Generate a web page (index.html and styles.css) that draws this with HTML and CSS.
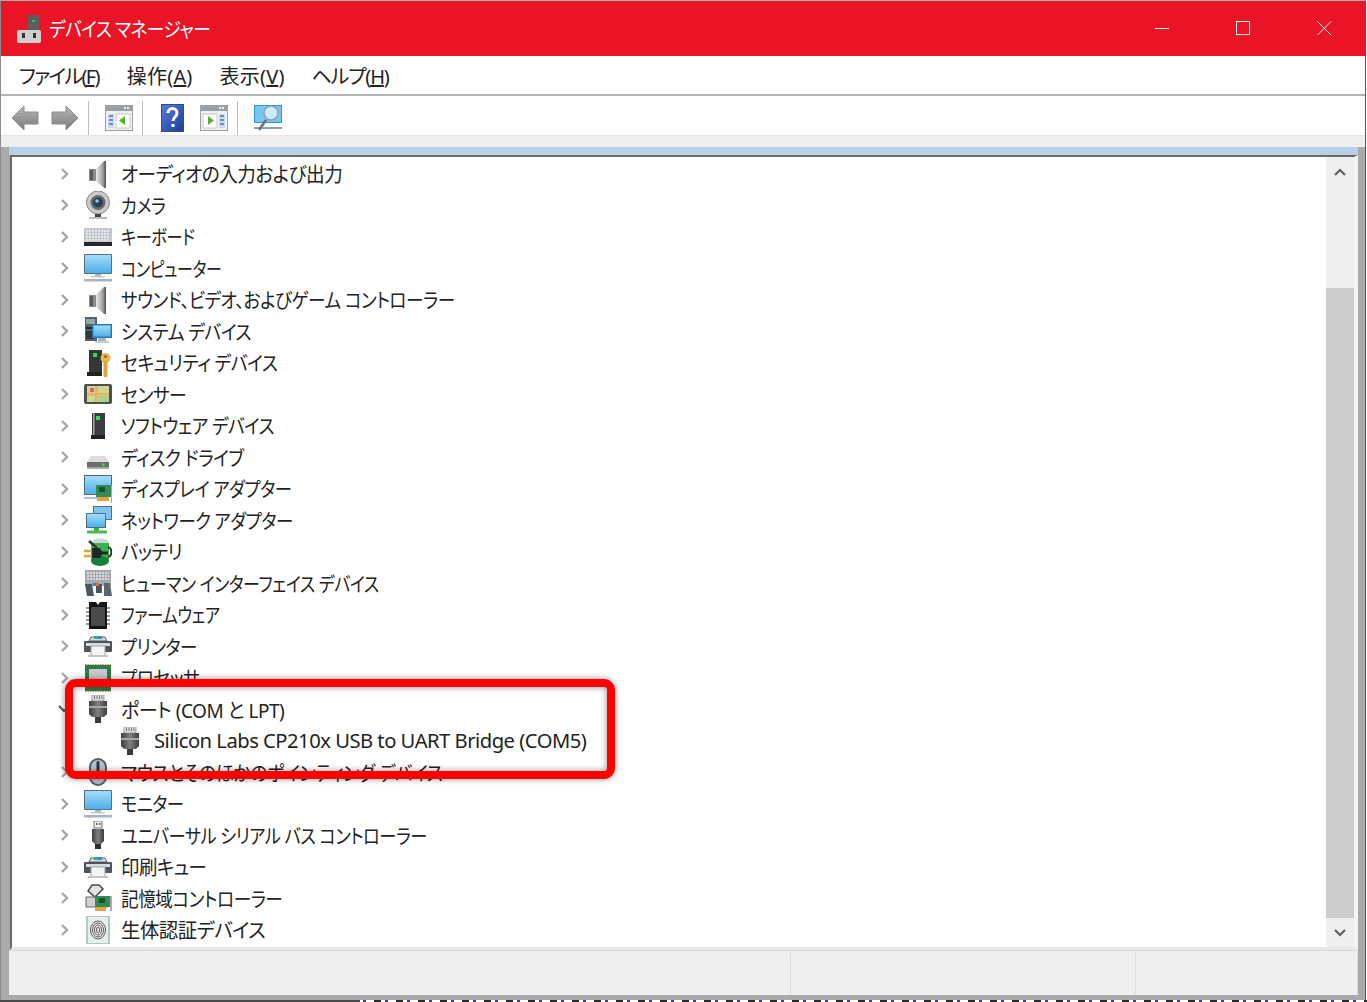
FILE: index.html
```html
<!DOCTYPE html>
<html lang="ja">
<head>
<meta charset="utf-8">
<title>デバイス マネージャー</title>
<link rel="stylesheet" href="styles.css">
</head>
<body>
<svg class="defs" aria-hidden="true">
  <defs>
    <linearGradient id="gSteel" x1="0" y1="0" x2="1" y2="0"><stop offset="0" stop-color="#e8e8e8"/><stop offset=".55" stop-color="#b0b0b0"/><stop offset="1" stop-color="#6a6a6a"/></linearGradient>
    <linearGradient id="gDark" x1="0" y1="0" x2="1" y2="0"><stop offset="0" stop-color="#3c3c3c"/><stop offset=".5" stop-color="#808080"/><stop offset="1" stop-color="#3c3c3c"/></linearGradient>
    <linearGradient id="gScreen" x1="0" y1="0" x2="0" y2="1"><stop offset="0" stop-color="#a3dcfa"/><stop offset="1" stop-color="#4fb0ea"/></linearGradient>
    <linearGradient id="gHelp" x1="0" y1="0" x2="1" y2="1"><stop offset="0" stop-color="#5a80d8"/><stop offset="1" stop-color="#1b3a94"/></linearGradient>
    <linearGradient id="gArrow" x1="0" y1="0" x2="0" y2="1"><stop offset="0" stop-color="#b8b8b8"/><stop offset="1" stop-color="#7a7a7a"/></linearGradient>

    <symbol id="i-speaker" viewBox="0 0 28 28"><rect x="5" y="9" width="7" height="12" fill="#8c8c8c"/><rect x="6" y="10" width="3" height="10" fill="#5a5a5a"/><path d="M12 9 20 1h2v27h-2l-8-7z" fill="url(#gSteel)"/><path d="M20.500 1H22v27h-1.500z" fill="#5f5f5f"/></symbol>
    <symbol id="i-camera" viewBox="0 0 28 28"><circle cx="14" cy="11.500" r="11.500" fill="#c9c9c9" stroke="#8a8a8a"/><circle cx="14" cy="11.500" r="7.500" fill="#6a6a6a"/><circle cx="14" cy="11.500" r="5" fill="#28405f"/><circle cx="13" cy="10" r="1.800" fill="#9fc4ea"/><rect x="11" y="23" width="6" height="3" fill="#444"/><rect x="5" y="26" width="18" height="2" fill="#bdbdbd"/></symbol>
    <symbol id="i-keyboard" viewBox="0 0 28 28"><rect x="0" y="5" width="28" height="14" fill="#c4c8ce"/><path d="M2 8h24M2 11h24M2 14h24M2 17h24" stroke="#eef0f3" stroke-width="1.600" stroke-dasharray="2 1"/><rect x="0" y="19" width="28" height="4" fill="#26282c"/></symbol>
    <symbol id="i-monitor" viewBox="0 0 28 28"><rect x="0" y="0" width="28" height="20" rx="1" fill="#5d6d7c"/><rect x="1" y="1" width="26" height="18" fill="url(#gScreen)"/><rect x="11" y="20" width="6" height="3" fill="#a9b4be"/><rect x="7" y="22" width="14" height="1.500" fill="#c4ccd3"/><rect x="0" y="25" width="28" height="2.500" fill="#aab3bb"/></symbol>
    <symbol id="i-system" viewBox="0 0 28 28"><rect x="1" y="0" width="12" height="24" fill="#56606a"/><rect x="2" y="2" width="9" height="5" fill="#9aa4ae"/><rect x="4" y="3" width="2" height="2" fill="#3be03b"/><rect x="2" y="10" width="8" height="2" fill="#26292d"/><rect x="2" y="14" width="8" height="8" fill="#33383d"/><rect x="8" y="7" width="20" height="14" fill="#1e7fb9"/><rect x="9.500" y="8.500" width="17" height="11" fill="url(#gScreen)"/><rect x="14" y="21" width="8" height="3" fill="#a9b4be"/><rect x="11" y="24" width="14" height="2" fill="#c7ced4"/></symbol>
    <symbol id="i-security" viewBox="0 0 28 28"><rect x="5" y="1" width="13" height="22" fill="#34373a"/><rect x="9" y="4" width="4" height="4" fill="#2fe34b"/><rect x="3" y="23" width="15" height="4" fill="#202225"/><circle cx="21.500" cy="9" r="5" fill="#e8b548"/><circle cx="21.500" cy="7.500" r="1.500" fill="#8a6a20"/><rect x="19.500" y="12" width="4" height="16" rx="1" fill="#dba538"/></symbol>
    <symbol id="i-sensor" viewBox="0 0 28 28"><rect x="0" y="4" width="28" height="20" rx="2" fill="#4f4f4f"/><rect x="3" y="6" width="22" height="16" fill="#cfd795"/><rect x="3" y="13" width="22" height="2.500" fill="#e8b45d"/><rect x="11" y="6" width="3" height="16" fill="#e8b45d"/><rect x="6" y="8" width="4" height="4" fill="#e0606c"/><rect x="15" y="16" width="10" height="6" fill="#a9d193"/></symbol>
    <symbol id="i-software" viewBox="0 0 28 28"><rect x="8" y="1" width="13" height="22" fill="#3a3d40"/><rect x="12" y="4" width="4" height="4" fill="#2fe34b"/><rect x="7" y="23" width="14" height="4" fill="#1f2124"/><rect x="9" y="1" width="1.500" height="22" fill="#a0a4a8"/></symbol>
    <symbol id="i-disk" viewBox="0 0 28 28"><path d="M7 13h14l4 6H3z" fill="#dcdcdc"/><rect x="3" y="19" width="22" height="6" fill="#6c6c6c"/><rect x="3" y="24" width="22" height="2" fill="#a8a8a8"/><rect x="18" y="20.500" width="2.500" height="2.500" fill="#3be03b"/></symbol>
    <symbol id="i-display" viewBox="0 0 28 28"><rect x="0" y="0" width="28" height="20" fill="#4f6a80"/><rect x="1" y="1" width="26" height="18" fill="url(#gScreen)"/><rect x="0" y="22" width="13" height="2" fill="#b4bfc8"/><rect x="12" y="10" width="15" height="12" fill="#2f8c55"/><rect x="15" y="12" width="6" height="5" fill="#1e4f33"/><rect x="13" y="22" width="12" height="4" fill="#e8a03a"/><rect x="27" y="10" width="1" height="18" fill="#aaa"/></symbol>
    <symbol id="i-network" viewBox="0 0 28 28"><rect x="9" y="0" width="19" height="14" fill="#4a7191"/><rect x="10" y="1" width="17" height="12" fill="#7fc5ee"/><rect x="2" y="7" width="20" height="15" fill="#4a7191"/><rect x="3" y="8" width="18" height="13" fill="url(#gScreen)"/><rect x="10" y="22" width="5" height="3" fill="#3fae3f"/><rect x="3" y="24.500" width="20" height="3" fill="#46bf46"/></symbol>
    <symbol id="i-battery" viewBox="0 0 28 28"><ellipse cx="16" cy="5" rx="9" ry="4.500" fill="#cdd8d2"/><rect x="7" y="5" width="18" height="18" fill="#3cb24a"/><ellipse cx="16" cy="23" rx="9" ry="5" fill="#16803a"/><path d="M5 3l8 7" stroke="#2f3336" stroke-width="2.500"/><path d="M24 9c4.500 1 4.500 9 0 10" fill="none" stroke="#2f3336" stroke-width="2"/><path d="M8 10h8l3 5-3 5H8z" fill="#22262a"/><path d="M0 13h8M0 18h8" stroke="#d7a93a" stroke-width="2.500"/><path d="M18 15h6" stroke="#22262a" stroke-width="3"/></symbol>
    <symbol id="i-hid" viewBox="0 0 28 28"><rect x="1" y="1" width="26" height="16" fill="#a4aab0"/><path d="M3 4h22M3 7h22M3 10h22" stroke="#e8eaec" stroke-width="1.600" stroke-dasharray="2 1"/><path d="M1 15h7l2 12H3zM12 15h6v9h-6z" fill="#4c5560"/><path d="M20 14h6l2 13h-8z" fill="#5d6670"/><rect x="9" y="14" width="3" height="3" fill="#2f7ce0"/><rect x="12" y="14" width="3" height="3" fill="#e26a3a"/></symbol>
    <symbol id="i-firmware" viewBox="0 0 28 28"><path d="M5 1h7l2 3 2-3h7v27H5z" fill="#141414"/><rect x="7" y="6" width="14" height="19" fill="#4a4a4a"/><path d="M2 7h3M2 11h3M2 15h3M2 19h3M2 23h3M23 7h3M23 11h3M23 15h3M23 19h3M23 23h3" stroke="#9a9a9a" stroke-width="2"/></symbol>
    <symbol id="i-printer" viewBox="0 0 28 28"><path d="M7 5h14l2 4H5z" fill="#d8dbde" stroke="#5a5f65"/><rect x="10" y="4" width="4" height="3" fill="#35b26b"/><rect x="14" y="4" width="4" height="3" fill="#2f8ee0"/><rect x="0" y="9" width="28" height="11" rx="1" fill="#50555b"/><rect x="2" y="11" width="24" height="3" fill="#d8dbde"/><rect x="7" y="14" width="14" height="10" fill="#f4f4f4" stroke="#a4a4a4"/><rect x="4" y="23" width="20" height="2" fill="#c4c4c4"/></symbol>
    <symbol id="i-cpu" viewBox="0 0 28 28"><rect x="1" y="1" width="26" height="26" fill="#2d7a4d"/><rect x="5" y="5" width="18" height="18" fill="#c9c9c9"/><path d="M1 .500h26M1 27.500h26" stroke="#d29b3b" stroke-dasharray="1.500 1"/></symbol>
    <symbol id="i-port" viewBox="0 0 28 28"><rect x="8" y="0" width="12" height="6" fill="#dcdcdc" stroke="#8a8a8a" stroke-width=".800"/><path d="M10.500 1v3M13 1v3M15.500 1v3M18 1v3" stroke="#777"/><path d="M5 6h18v13l-3 3H8l-3-3z" fill="url(#gDark)"/><path d="M5 11h18v2H5z" fill="#a8a8a8"/><rect x="11" y="22" width="6" height="6" fill="#3a3a3a"/></symbol>
    <symbol id="i-mouse" viewBox="0 0 28 28"><rect x="5" y="0" width="18" height="28" rx="9" fill="#565e66"/><rect x="7" y="2" width="14" height="24" rx="7" fill="#b7c0c9"/><rect x="12.500" y="3" width="3" height="11" rx="1.500" fill="#30353a"/></symbol>
    <symbol id="i-usb" viewBox="0 0 28 28"><rect x="10" y="0" width="8" height="7" fill="#f2f2f2" stroke="#777"/><rect x="12" y="2" width="1.500" height="2" fill="#555"/><rect x="15" y="2" width="1.500" height="2" fill="#555"/><path d="M8 8h12v12l-3 3h-6l-3-3z" fill="url(#gDark)"/><rect x="11" y="23" width="6" height="5" fill="#2f2f2f"/></symbol>
    <symbol id="i-storage" viewBox="0 0 28 28"><path d="M8 1h7l4 4-8 8-7-6z" fill="#e4e4e4" stroke="#45494d" stroke-width="1.500"/><path d="M2 13h14l8 2v8H2z" fill="#d0d2d4" stroke="#62666a"/><rect x="11" y="12" width="15" height="11" fill="#2f8c55"/><rect x="15" y="14" width="6" height="5" fill="#1e4f33"/><rect x="11" y="23" width="11" height="4" fill="#e8a03a"/><rect x="26" y="12" width="2" height="15" fill="#aaa"/></symbol>
    <symbol id="i-biometric" viewBox="0 0 28 28"><rect x="3" y="0" width="22" height="28" fill="#e9efec" stroke="#9dbcae" stroke-width="1.500"/><g fill="none" stroke="#5a5a5a" stroke-width="1"><ellipse cx="14" cy="14" rx="7.500" ry="9"/><ellipse cx="14" cy="14" rx="5.500" ry="7"/><ellipse cx="14" cy="14" rx="3.500" ry="5"/><ellipse cx="14" cy="14" rx="1.500" ry="3"/></g></symbol>
    <symbol id="i-chev" viewBox="0 0 10 14"><path d="M2 2l5 5-5 5" fill="none" stroke="#a6a6a6" stroke-width="2.400"/></symbol>
    <symbol id="i-chev-d" viewBox="0 0 14 10"><path d="M2 2l5 5 5-5" fill="none" stroke="#555" stroke-width="2"/></symbol>
    <symbol id="i-pane" viewBox="0 0 28 26"><rect x=".5" y=".5" width="27" height="25" fill="#eef1f2" stroke="#9aa0a4"/><rect x="1" y="1" width="26" height="5" fill="#9aa0a4"/><rect x="19" y="2" width="2" height="2" fill="#eef1f2"/><rect x="22" y="2" width="2" height="2" fill="#eef1f2"/></symbol>
  </defs>
</svg>

<div class="window">
  <header class="titlebar">
    <svg class="title-icon" viewBox="0 0 24 28"><rect x="11" y="0" width="11" height="15" fill="#5d5d5d"/><rect x="15.500" y="5" width="2" height="2" fill="#38e04a"/><rect x="0" y="15" width="24" height="13" rx="2" fill="#cfcfcf"/><rect x="5" y="18" width="3" height="5" fill="#333"/><rect x="16" y="18" width="3" height="5" fill="#333"/></svg>
    <span class="title-text">デバイス マネージャー</span>
    <div class="caption">
      <svg class="cap-btn" viewBox="0 0 16 16"><path d="M0 8h15" stroke="#fff" fill="none"/></svg>
      <svg class="cap-btn" viewBox="0 0 16 16"><rect x=".5" y=".5" width="14" height="14" stroke="#fff" fill="none"/></svg>
      <svg class="cap-btn" viewBox="0 0 16 16"><path d="M.5.500l14.500 14.500M15 .5.500 15" stroke="#fff" fill="none"/></svg>
    </div>
  </header>

  <nav class="menubar">
    <span class="menu menu-file">ファイル(<u>F</u>)</span>
    <span class="menu menu-kanji">操作(<u>A</u>)</span>
    <span class="menu menu-kanji">表示(<u>V</u>)</span>
    <span class="menu menu-help">ヘルプ(<u>H</u>)</span>
  </nav>

  <div class="toolbar">
    <svg class="tb-arrow" viewBox="0 0 28 26"><path d="M13 1 1 13l12 12v-6h14V7H13z" fill="url(#gArrow)" stroke="#8c8c8c"/></svg>
    <svg class="tb-arrow tb-next" viewBox="0 0 28 26"><path d="M15 1l12 12-12 12v-6H1V7h14z" fill="url(#gArrow)" stroke="#8c8c8c"/></svg>
    <span class="tb-sep"></span>
    <svg class="tb-pane" viewBox="0 0 28 26"><use href="#i-pane"/><path d="M3 9h6v14H3z" fill="#cdd9ec"/><path d="M4 11h4M4 15h4M4 19h4" stroke="#6f8fc4" stroke-width="2"/><path d="M11 9h14v14H11z" fill="#fff" stroke="#c8c8c8"/><path d="M20 11v9l-6-4.500z" fill="#52b52b"/></svg>
    <span class="tb-sep tb-sep-b"></span>
    <svg class="tb-help" viewBox="0 0 23 28"><rect x="0" y="0" width="23" height="28" fill="url(#gHelp)"/><rect x=".5" y=".5" width="22" height="27" fill="none" stroke="#2a4aa5"/><path d="M7 9c0-6 9-6 9 0 0 4-4 4-4 8" fill="none" stroke="#fff" stroke-width="3"/><rect x="10.500" y="20" width="3" height="3" fill="#fff"/></svg>
    <svg class="tb-pane tb-pane-b" viewBox="0 0 28 26"><use href="#i-pane"/><path d="M3 9h14v14H3z" fill="#fff" stroke="#c8c8c8"/><path d="M8 11v9l6-4.500z" fill="#52b52b"/><path d="M19 9h6v14h-6z" fill="#cdd9ec"/><path d="M20 11h4M20 15h4M20 19h4" stroke="#6f8fc4" stroke-width="2"/></svg>
    <span class="tb-sep tb-sep-c"></span>
    <svg class="tb-scan" viewBox="0 0 28 26"><rect x="0" y="0" width="28" height="18" fill="#2e97d8"/><rect x="1" y="1" width="26" height="16" fill="#79c6f0"/><path d="M0 23h28" stroke="#8fa0ad" stroke-width="2"/><path d="M12 15 5 25" stroke="#6b6f73" stroke-width="2.500"/><circle cx="17" cy="8" r="7" fill="#c9ebfa" stroke="#8fa0ad" stroke-width="1.500"/></svg>
  </div>

  <div class="strip"></div>

  <div class="frame">
    <div class="mdi-title"></div>
    <div class="client">
      <ul class="tree">
        <li class="row w93"><svg class="chev"><use href="#i-chev"/></svg><svg class="icon"><use href="#i-speaker"/></svg><span>オーディオの入力および出力</span></li>
        <li class="row w86"><svg class="chev"><use href="#i-chev"/></svg><svg class="icon"><use href="#i-camera"/></svg><span>カメラ</span></li>
        <li class="row w81"><svg class="chev"><use href="#i-chev"/></svg><svg class="icon"><use href="#i-keyboard"/></svg><span>キーボード</span></li>
        <li class="row w80"><svg class="chev"><use href="#i-chev"/></svg><svg class="icon"><use href="#i-monitor"/></svg><span>コンピューター</span></li>
        <li class="row w88"><svg class="chev"><use href="#i-chev"/></svg><svg class="icon"><use href="#i-speaker"/></svg><span>サウンド、ビデオ、およびゲーム コントローラー</span></li>
        <li class="row w89"><svg class="chev"><use href="#i-chev"/></svg><svg class="icon"><use href="#i-system"/></svg><span>システム デバイス</span></li>
        <li class="row w89"><svg class="chev"><use href="#i-chev"/></svg><svg class="icon"><use href="#i-security"/></svg><span>セキュリティ デバイス</span></li>
        <li class="row w89"><svg class="chev"><use href="#i-chev"/></svg><svg class="icon"><use href="#i-sensor"/></svg><span>センサー</span></li>
        <li class="row w88"><svg class="chev"><use href="#i-chev"/></svg><svg class="icon"><use href="#i-software"/></svg><span>ソフトウェア デバイス</span></li>
        <li class="row w89"><svg class="chev"><use href="#i-chev"/></svg><svg class="icon"><use href="#i-disk"/></svg><span>ディスク ドライブ</span></li>
        <li class="row w87"><svg class="chev"><use href="#i-chev"/></svg><svg class="icon"><use href="#i-display"/></svg><span>ディスプレイ アダプター</span></li>
        <li class="row w87"><svg class="chev"><use href="#i-chev"/></svg><svg class="icon"><use href="#i-network"/></svg><span>ネットワーク アダプター</span></li>
        <li class="row w91"><svg class="chev"><use href="#i-chev"/></svg><svg class="icon"><use href="#i-battery"/></svg><span>バッテリ</span></li>
        <li class="row w85"><svg class="chev"><use href="#i-chev"/></svg><svg class="icon"><use href="#i-hid"/></svg><span>ヒューマン インターフェイス デバイス</span></li>
        <li class="row w82"><svg class="chev"><use href="#i-chev"/></svg><svg class="icon"><use href="#i-firmware"/></svg><span>ファームウェア</span></li>
        <li class="row w87"><svg class="chev"><use href="#i-chev"/></svg><svg class="icon"><use href="#i-printer"/></svg><span>プリンター</span></li>
        <li class="row w88"><svg class="chev"><use href="#i-chev"/></svg><svg class="icon"><use href="#i-cpu"/></svg><span>プロセッサ</span></li>
        <li class="row w95"><svg class="chev chev-open"><use href="#i-chev-d"/></svg><svg class="icon"><use href="#i-port"/></svg><span>ポート (COM と LPT)</span></li>
        <li class="row row-child w101"><svg class="icon"><use href="#i-port"/></svg><span>Silicon Labs CP210x USB to UART Bridge (COM5)</span></li>
        <li class="row w90"><svg class="chev"><use href="#i-chev"/></svg><svg class="icon"><use href="#i-mouse"/></svg><span>マウスとそのほかのポインティング デバイス</span></li>
        <li class="row w86"><svg class="chev"><use href="#i-chev"/></svg><svg class="icon"><use href="#i-monitor"/></svg><span>モニター</span></li>
        <li class="row w86"><svg class="chev"><use href="#i-chev"/></svg><svg class="icon"><use href="#i-usb"/></svg><span>ユニバーサル シリアル バス コントローラー</span></li>
        <li class="row w92"><svg class="chev"><use href="#i-chev"/></svg><svg class="icon"><use href="#i-printer"/></svg><span>印刷キュー</span></li>
        <li class="row w88"><svg class="chev"><use href="#i-chev"/></svg><svg class="icon"><use href="#i-storage"/></svg><span>記憶域コントローラー</span></li>
        <li class="row w97"><svg class="chev"><use href="#i-chev"/></svg><svg class="icon"><use href="#i-biometric"/></svg><span>生体認証デバイス</span></li>
      </ul>
      <div class="scrollbar">
        <svg class="sb-arrow" viewBox="0 0 12 8"><path d="M1 7l5-5 5 5" fill="none" stroke="#5f5f5f" stroke-width="2.200"/></svg>
        <div class="sb-track"><div class="sb-thumb"></div></div>
        <svg class="sb-arrow" viewBox="0 0 12 8"><path d="M1 1l5 5 5-5" fill="none" stroke="#5f5f5f" stroke-width="2.200"/></svg>
      </div>
    </div>
    <div class="statusbar">
      <div class="st-cell st-a"></div>
      <div class="st-cell st-b"></div>
      <div class="st-cell st-c"></div>
    </div>
  </div>
</div>
<div class="desktop-edge"></div>
<div class="callout"></div>
</body>
</html>
```
FILE: styles.css
```css
* { box-sizing: border-box; }
html, body { margin: 0; padding: 0; }
body {
  width: 1367px;
  height: 1002px;
  overflow: hidden;
  position: relative;
  background: #fff;
  font-family: "Noto Sans", "Noto Sans CJK JP", sans-serif;
  font-feature-settings: "palt";
  color: #222;
}
.defs { position: absolute; width: 0; height: 0; }

.window {
  width: 1366px;
  height: 1000px;
  display: flex;
  flex-direction: column;
  border-right: 1px solid #e91426;
  border-left: 1px solid #8a8a8a;
  border-top: 1px solid #b0b0b0;
  background: #fff;
}

.titlebar {
  height: 55px;
  flex: none;
  display: flex;
  align-items: center;
  background: #e91426;
  padding-left: 16px;
  color: #fff;
}
.title-icon { width: 24px; height: 28px; flex: none; }
.title-text {
  margin-left: 8px;
  font-size: 20px;
  letter-spacing: -0.6px;
  display: inline-block;
  transform: scaleX(.885);
  transform-origin: left center;
}
.caption { margin-left: auto; display: flex; align-items: center; gap: 66px; padding-right: 33px; }
.cap-btn { width: 15px; height: 15px; display: block; }

.menubar {
  height: 40px;
  flex: none;
  display: flex;
  align-items: center;
  gap: 27px;
  padding-left: 18px;
  border-bottom: 2px solid #b4b4b4;
}
.menu { font-size: 20px; color: #222; }
.menu-file { letter-spacing: -1.7px; margin-right: 1px; }
.menu-kanji { letter-spacing: 0.2px; }
.menu-help { letter-spacing: -1.2px; }

.toolbar {
  height: 40px;
  flex: none;
  display: flex;
  align-items: center;
  padding: 4px 0 0 10px;
  border-bottom: 1px solid #e6e6e6;
}
.tb-arrow { width: 28px; height: 26px; flex: none; }
.tb-next { margin-left: 12px; }
.tb-sep { width: 1px; height: 34px; background: #bdbdbd; flex: none; margin-left: 9px; }
.tb-pane { width: 28px; height: 26px; flex: none; margin-left: 16px; }
.tb-sep-b { margin-left: 9px; }
.tb-help { width: 23px; height: 28px; flex: none; margin-left: 18px; }
.tb-pane-b { margin-left: 16px; }
.tb-sep-c { margin-left: 9px; }
.tb-scan { width: 28px; height: 26px; flex: none; margin-left: 16px; }

.strip { height: 11px; flex: none; background: #efefef; }

.frame {
  flex: 1;
  min-height: 0;
  display: flex;
  flex-direction: column;
  background: #a9a9a9;
  padding: 0 7px 5px 7px;
  border-left: 1px solid #a9a9a9;
}
.mdi-title { height: 8px; flex: none; background: #b8d0ea; }
.client {
  height: 795px;
  flex: none;
  display: flex;
  margin-left: 1px;
  background: #fff;
  border-top: 2px solid #6a6a6a;
  border-left: 2px solid #6a6a6a;
  border-right: 4px solid #f4f4f4;
  border-bottom: 3px solid #e8e8e8;
}
.tree {
  flex: 1;
  list-style: none;
  margin: 0;
  padding: 1px 0 0 48px;
  overflow: hidden;
}
.row {
  height: 31.5px;
  display: flex;
  align-items: center;
  font-size: 20px;
  letter-spacing: -0.5px;
  white-space: nowrap;
  color: #222;
}
.row span { display: inline-block; transform-origin: left center; }
.w80 span { transform: scaleX(.80); }
.w81 span { transform: scaleX(.81); }
.w82 span { transform: scaleX(.82); }
.w85 span { transform: scaleX(.85); }
.w86 span { transform: scaleX(.86); }
.w87 span { transform: scaleX(.87); }
.w88 span { transform: scaleX(.88); }
.w89 span { transform: scaleX(.89); }
.w90 span { transform: scaleX(.90); }
.w91 span { transform: scaleX(.91); }
.w92 span { transform: scaleX(.92); }
.w93 span { transform: scaleX(.93); }
.w95 span { transform: scaleX(.95); }
.w97 span { transform: scaleX(.97); }
.w101 span { transform: scaleX(1.01); }
.chev { width: 10px; height: 14px; flex: none; margin-right: 14px; }
.chev-open { width: 14px; height: 10px; margin-left: -3px; margin-right: 13px; }
.icon { width: 28px; height: 28px; flex: none; margin-right: 9px; }
.row-child { padding-left: 56px; }
.row-child .icon { margin-right: 10px; }

.scrollbar {
  width: 28px;
  flex: none;
  display: flex;
  flex-direction: column;
  align-items: center;
  background: #efefef;
  padding: 11px 0 10px;
}
.sb-arrow { width: 12px; height: 8px; flex: none; }
.sb-track { flex: 1; width: 100%; padding: 112px 0 11px; }
.sb-thumb { height: 100%; background: #cdcdcd; }

.statusbar {
  flex: 1;
  display: grid;
  grid-template-columns: 782px 345px 1fr;
  background: #efefef;
  border-top: 1px solid #d8d8d8;
}
.st-cell { border-right: 1px solid #dcdcdc; margin: 2px 0 1px; }

.desktop-edge {
  height: 2px;
  background:
    linear-gradient(90deg, #4a4a4a 0 360px, transparent 360px),
    repeating-linear-gradient(90deg, #2a2a2a 0 7px, #fff 7px 11px, #3a3aa0 11px 14px, #fff 14px 22px);
}

.callout {
  position: absolute;
  left: 65px;
  top: 679px;
  width: 550px;
  height: 100px;
  border: 8px solid #f00;
  border-radius: 11px;
  box-shadow: 0 0 6px rgba(0, 0, 0, .45), inset 0 0 6px rgba(0, 0, 0, .45);
}
```
